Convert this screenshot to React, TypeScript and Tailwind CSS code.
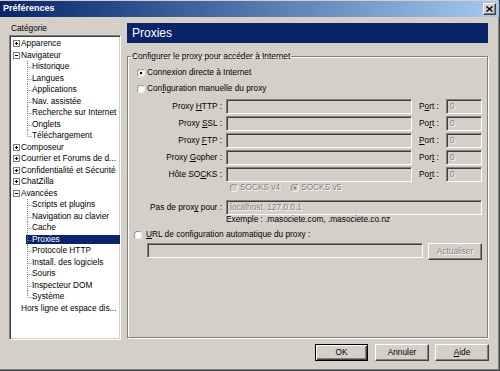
import React from "react";

type TreeItem = {
  label: string;
  level: 0 | 1;
  toggle?: "plus" | "minus";
  last?: boolean;
  selected?: boolean;
};

const tree: TreeItem[] = [
  { label: "Apparence", level: 0, toggle: "plus" },
  { label: "Navigateur", level: 0, toggle: "minus" },
  { label: "Historique", level: 1 },
  { label: "Langues", level: 1 },
  { label: "Applications", level: 1 },
  { label: "Nav. assistée", level: 1 },
  { label: "Recherche sur Internet", level: 1 },
  { label: "Onglets", level: 1 },
  { label: "Téléchargement", level: 1, last: true },
  { label: "Composeur", level: 0, toggle: "plus" },
  { label: "Courrier et Forums de d...", level: 0, toggle: "plus" },
  { label: "Confidentialité et Sécurité", level: 0, toggle: "plus" },
  { label: "ChatZilla", level: 0, toggle: "plus" },
  { label: "Avancées", level: 0, toggle: "minus" },
  { label: "Scripts et plugins", level: 1 },
  { label: "Navigation au clavier", level: 1 },
  { label: "Cache", level: 1 },
  { label: "Proxies", level: 1, selected: true },
  { label: "Protocole HTTP", level: 1 },
  { label: "Install. des logiciels", level: 1 },
  { label: "Souris", level: 1 },
  { label: "Inspecteur DOM", level: 1 },
  { label: "Système", level: 1, last: true },
  { label: "Hors ligne et espace dis...", level: 0 },
];

const Toggle = ({ open }: { open: boolean }) => (
  <svg width="7" height="7" viewBox="0 0 7 7" className="shrink-0">
    <rect x="0.5" y="0.5" width="6" height="6" fill="#fff" stroke="#808080" />
    <path d="M2 3.5h3" stroke="#000" />
    {!open && <path d="M3.5 2v3" stroke="#000" />}
  </svg>
);

const Branch = ({ last }: { last?: boolean }) => (
  <svg width="6" height="11.5" className="shrink-0">
    <line x1="1.5" y1="0" x2="1.5" y2={last ? 6 : 11.5} stroke="#808080" strokeDasharray="1 1" />
    <line x1="1.5" y1="6.5" x2="6" y2="6.5" stroke="#808080" strokeDasharray="1 1" />
  </svg>
);

const Radio = ({ checked, disabled }: { checked?: boolean; disabled?: boolean }) => (
  <svg width="8" height="8" viewBox="0 0 8 8" className="shrink-0">
    <path d="M1.2 6.8A3.5 3.5 0 0 1 6.8 1.2" fill="none" stroke="#808080" />
    <path d="M6.8 1.2A3.5 3.5 0 0 1 1.2 6.8" fill="none" stroke="#fff" />
    <circle cx="4" cy="4" r="3" fill={disabled ? "#d4d0c8" : "#fff"} />
    {checked && <circle cx="4" cy="4" r="1.3" fill={disabled ? "#808080" : "#000"} />}
  </svg>
);

const Field = ({ className = "", value }: { className?: string; value?: string }) => (
  <div
    className={`h-[15px] shrink-0 border border-t-[#808080] border-l-[#808080] border-b-white border-r-white bg-[#d4d0c8] shadow-[inset_1px_1px_0_#404040] px-[3px] leading-[13px] text-[#808080] [text-shadow:1px_1px_0_#fff] overflow-hidden whitespace-nowrap ${className}`}
  >
    {value}
  </div>
);

const Btn = ({
  children,
  isDefault,
  disabled,
  className = "",
}: {
  children: React.ReactNode;
  isDefault?: boolean;
  disabled?: boolean;
  className?: string;
}) => (
  <div
    className={`flex h-[17px] items-center justify-center ${
      isDefault
        ? "border border-black shadow-[inset_1px_1px_0_#fff,inset_-1px_-1px_0_#404040,inset_-2px_-2px_0_#808080]"
        : "border border-t-white border-l-white border-b-[#404040] border-r-[#404040] shadow-[inset_-1px_-1px_0_#808080]"
    } ${disabled ? "text-[#808080] [text-shadow:1px_1px_0_#fff]" : "text-black"} ${className}`}
  >
    {children}
  </div>
);

const ProxyRow = ({ label, port }: { label: React.ReactNode; port: React.ReactNode }) => (
  <div className="flex h-[15px] items-center">
    <span className="w-[96px] pr-[2px] text-right whitespace-nowrap">{label}</span>
    <Field className="ml-[2px] w-[186px]" />
    <span className="ml-[7px] w-[27px] whitespace-nowrap">{port}</span>
    <Field className="w-[36px]" value="0" />
  </div>
);

export default function App() {
  return (
    <div className="flex h-[371px] w-[500px] flex-col overflow-hidden border-r border-b border-r-[#404040] border-b-[#404040] bg-[#d4d0c8] pt-[1px] font-['Liberation_Sans',Arial,sans-serif] text-[8.3px] text-black shadow-[inset_-1px_-1px_0_#808080]">
      {/* title bar */}
      <div className="flex h-[16px] items-center justify-between bg-gradient-to-r from-[#0a246a] to-[#a6caf0] pl-[3px] pr-[3px]">
        <span className="text-[9px] font-bold text-white">Préférences</span>
        <div className="flex h-[12px] w-[13px] items-center justify-center border border-t-white border-l-white border-b-[#404040] border-r-[#404040] bg-[#d4d0c8] shadow-[inset_-1px_-1px_0_#808080]">
          <svg width="7" height="6" viewBox="0 0 7 6">
            <path d="M0.5 0.5l6 5M6.5 0.5l-6 5" stroke="#000" strokeWidth="1.4" />
          </svg>
        </div>
      </div>

      <div className="mt-[1px] flex h-[322px] pl-[9px]">
        {/* left: category tree */}
        <div className="flex w-[112px] flex-col">
          <div className="h-[17px] pt-[6px] pl-[2px] leading-[9px]">Catégorie</div>
          <div className="h-[305px] border border-t-[#808080] border-l-[#808080] border-b-white border-r-white bg-white pt-[2px] shadow-[inset_1px_1px_0_#404040,inset_-1px_-1px_0_#d4d0c8] pl-[2px]">
            {tree.map((item) => (
              <div key={item.label} className="flex h-[11.5px] items-center leading-[11.5px] whitespace-nowrap">
                {item.level === 0 ? (
                  <>
                    {item.toggle ? (
                      <span className="ml-[1px] mr-[1px] flex">
                        <Toggle open={item.toggle === "minus"} />
                      </span>
                    ) : (
                      <span className="w-[9px]" />
                    )}
                    <span>{item.label}</span>
                  </>
                ) : (
                  <>
                    <span className="w-[14px] shrink-0" />
                    <span
                      className={`my-[1px] flex flex-1 items-center self-stretch ${
                        item.selected ? "bg-[#0a246a] text-white" : ""
                      }`}
                    >
                      <Branch last={item.last} />
                      <span>{item.label}</span>
                    </span>
                  </>
                )}
              </div>
            ))}
          </div>
        </div>

        {/* right panel */}
        <div className="ml-[6px] flex w-[361px] flex-col">
          <div className="mt-[5px] flex h-[20px] items-center bg-[#0a246a] pl-[5px] text-[12px] text-white">
            Proxies
          </div>
          <fieldset className="mt-[8px] h-[287px] border border-[#808080] shadow-[inset_1px_1px_0_#fff,1px_1px_0_#fff]">
            <legend className="ml-[3px] px-[1px] leading-[10px]">Configurer le proxy pour accéder à Internet</legend>

            <div className="mt-[6px] flex h-[11px] items-center pl-[9px]">
              <Radio checked />
              <span className="ml-[2px]">Connexion directe à Internet</span>
            </div>
            <div className="mt-[5px] flex h-[11px] items-center pl-[9px]">
              <Radio />
              <span className="ml-[2px]">
                Con<u>f</u>iguration manuelle du proxy
              </span>
            </div>

            <div className="mt-[5px] flex flex-col gap-[2px]">
              <ProxyRow label={<>Proxy <u>H</u>TTP :</>} port={<>P<u>o</u>rt :</>} />
              <ProxyRow label={<>Proxy <u>S</u>SL :</>} port={<>Po<u>r</u>t :</>} />
              <ProxyRow label={<>Proxy <u>F</u>TP :</>} port={<><u>P</u>ort :</>} />
              <ProxyRow label={<>Proxy <u>G</u>opher :</>} port={<>Por<u>t</u> :</>} />
              <ProxyRow label={<>Hôte SO<u>C</u>KS :</>} port={<>Po<u>r</u>t :</>} />
            </div>

            <div className="flex h-[11px] items-center pl-[102px] text-[#808080] [text-shadow:1px_1px_0_#fff]">
              <Radio disabled />
              <span className="ml-[2px]">SOCKS v4</span>
              <span className="ml-[11px] flex items-center">
                <Radio checked disabled />
                <span className="ml-[2px]">SOCKS v5</span>
              </span>
            </div>

            <div className="mt-[7px] flex h-[15px] items-center">
              <span className="w-[96px] pr-[2px] text-right whitespace-nowrap">
                Pas de prox<u>y</u> pour :
              </span>
              <Field className="ml-[2px] w-[256px]" value="localhost, 127.0.0.1" />
            </div>
            <div className="h-[9px] pl-[98px] leading-[9px]">Exemple : .masociete.com, .masociete.co.nz</div>

            <div className="mt-[5px] flex h-[11px] items-center pl-[6px]">
              <Radio />
              <span className="ml-[4px]">
                <u>U</u>RL de configuration automatique du proxy :
              </span>
            </div>
            <div className="mt-[3px] flex items-start pl-[19px]">
              <Field className="w-[276px]" />
              <Btn disabled className="ml-[5px] w-[54px]">
                Actualiser
              </Btn>
            </div>
          </fieldset>
        </div>
      </div>

      {/* dialog buttons */}
      <div className="mt-[4px] flex justify-end gap-[6px] pr-[10px]">
        <Btn isDefault className="mr-[1px] w-[53px]">
          OK
        </Btn>
        <Btn className="w-[54px]">Annuler</Btn>
        <Btn className="w-[54px]">
          <u>A</u>ide
        </Btn>
      </div>
    </div>
  );
}
